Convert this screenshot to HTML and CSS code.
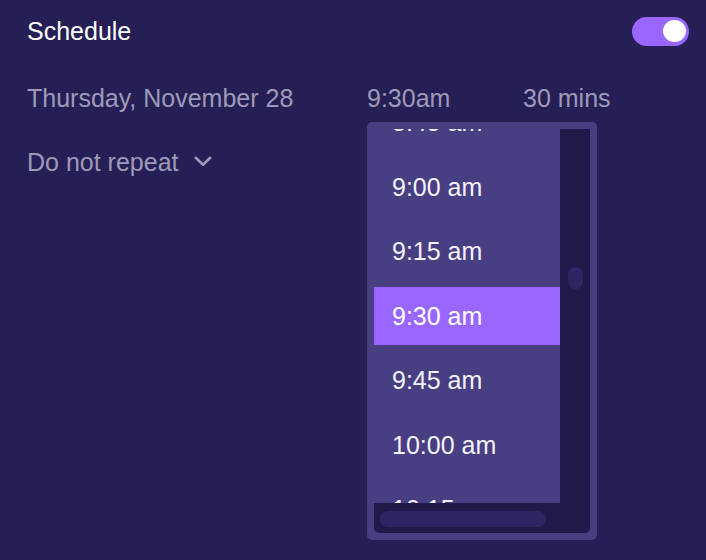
FILE: index.html
```html
<!DOCTYPE html>
<html lang="en">
<head>
<meta charset="utf-8">
<title>Schedule</title>
<link rel="stylesheet" href="styles.css">
</head>
<body>
<div class="page">
  <div class="header">
    <span class="title">Schedule</span>
    <div class="toggle"><span class="knob"></span></div>
  </div>
  <div class="when">
    <span class="date">Thursday, November 28</span>
    <span class="time">9:30am</span>
    <span class="duration">30 mins</span>
  </div>
  <div class="repeat">
    <span>Do not repeat</span>
    <svg class="chev" width="18" height="11" viewBox="0 0 18 11"><path d="M1.8 1.8 L9 8.8 L16.2 1.8" fill="none" stroke="currentColor" stroke-width="2.6" stroke-linecap="round" stroke-linejoin="round"/></svg>
  </div>
</div>

<div class="dropdown">
  <div class="inner">
    <div class="list">
      <ul class="items">
        <li class="item">8:45 am</li>
        <li class="item">9:00 am</li>
        <li class="item">9:15 am</li>
        <li class="item selected">9:30 am</li>
        <li class="item">9:45 am</li>
        <li class="item">10:00 am</li>
        <li class="item">10:15 am</li>
      </ul>
    </div>
    <div class="vtrack"><span class="vthumb"></span></div>
    <div class="htrack"><span class="hthumb"></span></div>
    <div class="corner"></div>
  </div>
</div>
</body>
</html>
```

FILE: styles.css
```css
html, body {
  margin: 0;
  padding: 0;
}
body {
  width: 706px;
  height: 560px;
  background: #261f55;
  font-family: "Liberation Sans", Arial, sans-serif;
  font-size: 25px;
  line-height: 30px;
  overflow: hidden;
  position: relative;
}
.page {
  padding: 16px 17px 0 27px;
  display: flex;
  flex-direction: column;
}
.header {
  display: flex;
  align-items: center;
  justify-content: space-between;
  height: 30px;
}
.title {
  color: #ffffff;
}
.toggle {
  width: 57px;
  height: 29px;
  border-radius: 15px;
  background: #9966ff;
  display: flex;
  align-items: center;
  justify-content: flex-end;
  padding-right: 3px;
  box-sizing: border-box;
}
.knob {
  width: 23px;
  height: 22px;
  border-radius: 50%;
  background: #ffffff;
}
.when {
  margin-top: 37px;
  display: flex;
  color: #9e9ab8;
}
.date {
  width: 340px;
}
.time {
  width: 156px;
}
.repeat {
  margin-top: 34px;
  display: flex;
  align-items: center;
  gap: 15px;
  color: #9e9ab8;
}
.chev {
  display: block;
  margin-top: -1px;
}

.dropdown {
  position: absolute;
  left: 367px;
  top: 122px;
  width: 230px;
  height: 418px;
  box-sizing: border-box;
  padding: 7px;
  background: #483e82;
  border-radius: 5px;
}
.inner {
  display: grid;
  grid-template-columns: 186px 30px;
  grid-template-rows: 374px 30px;
  background: #1f1a4a;
  border-radius: 0 0 5px 5px;
  overflow: hidden;
}
.list {
  background: #483e82;
  overflow: hidden;
}
.items {
  list-style: none;
  margin: -36px 0 0;
  padding: 0;
  display: flex;
  flex-direction: column;
  gap: 6.5px;
}
.item {
  height: 58px;
  line-height: 58px;
  padding-left: 18px;
  color: #f4f2fb;
  white-space: nowrap;
}
.item.selected {
  background: #9966ff;
  color: #ffffff;
}
.vtrack {
  display: flex;
  flex-direction: column;
  align-items: center;
  padding-top: 138px;
}
.vthumb {
  width: 15px;
  height: 22px;
  border-radius: 8px;
  background: #2e2663;
}
.htrack {
  padding: 8px 0 0 6px;
}
.hthumb {
  display: block;
  width: 166px;
  height: 16px;
  border-radius: 8px;
  background: #2e2663;
}
.corner {
  background: #1f1a4a;
}
```
